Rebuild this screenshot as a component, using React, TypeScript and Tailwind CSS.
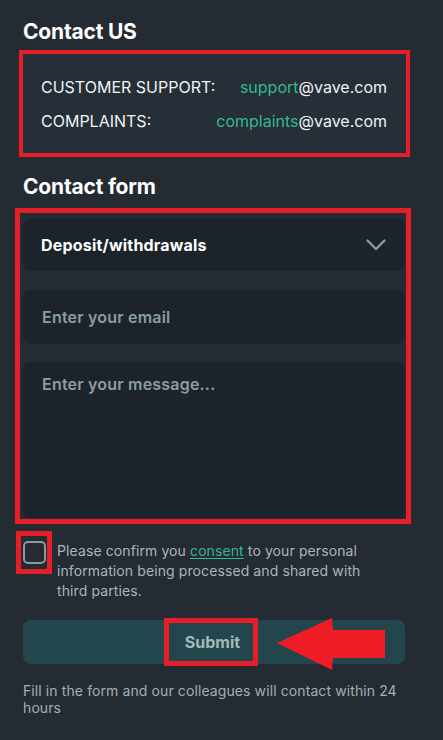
import React from "react";

export default function App() {
  return (
    <div
      className="relative w-[443px] min-h-[740px] bg-[#242b33] text-white pl-[23px] pr-[38px] pt-[18px]"
      style={{ fontFamily: "Inter, 'Noto Sans', sans-serif" }}
    >
      <h1 className="text-[21px] font-bold leading-[28px] tracking-[-0.2px] text-white">Contact US</h1>

      <div className="mt-[4px] -ml-[4px] -mr-[5px] border-4 border-[#e61e28] bg-[#262e37] pl-[18px] pr-[19px] pt-[23px] pb-[22px] text-[16px] text-[#eef2f3]">
        <div className="flex justify-between leading-[20px]">
          <span>CUSTOMER SUPPORT:</span>
          <span>
            <span className="text-[#34b98e]">support</span>@vave.com
          </span>
        </div>
        <div className="flex justify-between leading-[20px] mt-[14px]">
          <span>COMPLAINTS:</span>
          <span>
            <span className="text-[#34b98e]">complaints</span>@vave.com
          </span>
        </div>
      </div>

      <h2 className="mt-[16px] text-[21px] font-bold leading-[28px] tracking-[-0.2px] text-white">Contact form</h2>

      <div className="mt-[7px] -ml-[8px] -mr-[6px] border-[5px] border-[#e61e28] pl-[3px] pr-px pt-[6px] pb-px flex flex-col gap-[19px]">
        <div className="h-[52px] rounded-[8px] bg-[#1d232b] flex items-center justify-between pl-[18px] pr-[19px]">
          <span className="text-[16px] font-bold text-white tracking-[0.2px]">Deposit/withdrawals</span>
          <svg width="20" height="12" viewBox="0 0 20 12" fill="none">
            <path d="M1.5 1.5 L10 10 L18.5 1.5" stroke="#8a9aa0" strokeWidth="2.4" strokeLinecap="round" strokeLinejoin="round" />
          </svg>
        </div>
        <div className="h-[54px] rounded-[8px] bg-[#1d232b] flex items-center pl-[19px]">
          <span className="text-[16px] font-semibold text-[#8c9da2] tracking-[0.2px]">Enter your email</span>
        </div>
        <div className="-mt-px h-[156px] rounded-[8px] bg-[#1d232b] pl-[19px] pt-[10px]">
          <span className="text-[16px] font-semibold text-[#8c9da2] tracking-[0.2px]">Enter your message...</span>
        </div>
      </div>

      <div className="mt-[7px] flex items-start gap-[5px]">
        <div className="-ml-[7px] w-[36px] h-[43px] border-[5px] border-[#e61e28] flex items-center justify-center shrink-0">
          <div className="w-[23px] h-[23px] rounded-[5px] border-2 border-[#8c9aa0]" />
        </div>
        <p className="pt-[10px] text-[14px] leading-[20px] text-[#aab6ba] tracking-[0.1px]">
          Please confirm you{" "}
          <span className="text-[#34b98e] underline underline-offset-2">consent</span> to your personal
          <br />
          information being processed and shared with
          <br />
          third parties.
        </p>
      </div>

      <div className="mt-[19px] h-[44px] rounded-[8px] bg-[#23464c] flex items-center justify-center">
        <span className="-ml-[6px] w-[94px] h-[48px] border-[5px] border-[#e61e28] flex items-center justify-center pl-[3px] text-[16px] font-bold text-[#a3b9bb]">
          Submit
        </span>
      </div>

      <p className="mt-[18px] text-[14px] leading-[17px] text-[#a3afb3] tracking-[0.1px]">
        Fill in the form and our colleagues will contact within 24 hours
      </p>

      <svg className="absolute left-[270px] top-[612px]" width="125" height="65" viewBox="270 612 125 65">
        <polygon points="277,643 332,618 333,630 385,630 385,658 333,658 332,670" fill="#ee1c25" strokeLinejoin="round" />
      </svg>
    </div>
  );
}
